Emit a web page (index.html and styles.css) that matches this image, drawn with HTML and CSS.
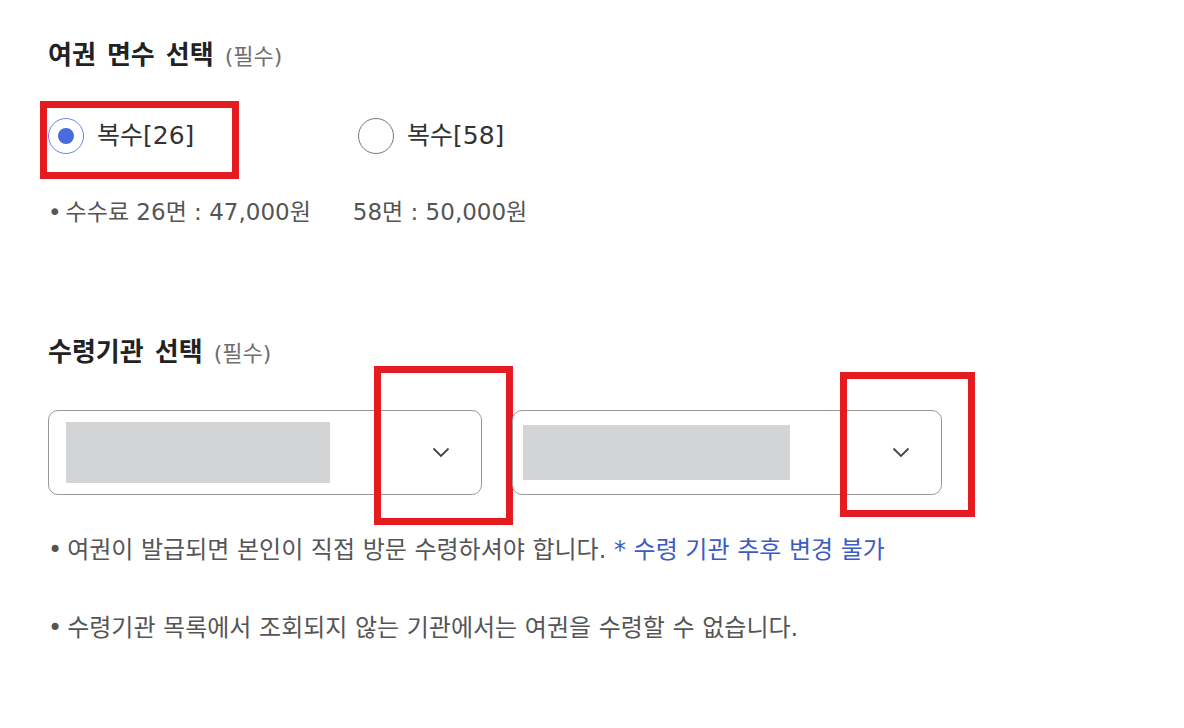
FILE: index.html
```html
<!DOCTYPE html>
<html lang="ko">
<head>
<meta charset="utf-8">
<link rel="stylesheet" href="styles.css">
</head>
<body>
<div class="page">
  <section class="sec sec-pages">
    <h2 class="title">여권 면수 선택 <span class="req">(필수)</span></h2>
    <div class="radios">
      <label class="radio checked">
        <span class="dot"></span>
        <span class="rlabel">복수[26]</span>
        <span class="mark mark-radio"></span>
      </label>
      <label class="radio">
        <span class="dot"></span>
        <span class="rlabel">복수[58]</span>
      </label>
    </div>
    <p class="note fee"><span class="bul">•</span>수수료 26면 : 47,000원<span class="fee2">58면 : 50,000원</span></p>
  </section>

  <section class="sec sec-office">
    <h2 class="title">수령기관 선택 <span class="req">(필수)</span></h2>
    <div class="selects">
      <div class="select s1">
        <span class="ph ph1"></span>
        <svg class="chev" width="18" height="11" viewBox="0 0 18 11"><path d="M1.5 1.5 L9 9 L16.5 1.5" fill="none" stroke="#444" stroke-width="1.8"/></svg>
        <span class="mark mark-s1"></span>
      </div>
      <div class="select s2">
        <span class="ph ph2"></span>
        <svg class="chev" width="18" height="11" viewBox="0 0 18 11"><path d="M1.5 1.5 L9 9 L16.5 1.5" fill="none" stroke="#444" stroke-width="1.8"/></svg>
        <span class="mark mark-s2"></span>
      </div>
    </div>
    <p class="note n1"><span class="bul">•</span>여권이 발급되면 본인이 직접 방문 수령하셔야 합니다. <span class="blue">* 수령 기관 추후 변경 불가</span></p>
    <p class="note n2"><span class="bul">•</span>수령기관 목록에서 조회되지 않는 기관에서는 여권을 수령할 수 없습니다.</p>
  </section>
</div>
</body>
</html>
```

FILE: styles.css
```css
* { box-sizing: border-box; }
html, body { margin: 0; padding: 0; background: #fff; }
body {
  font-family: "DejaVu Sans", "Noto Sans CJK KR", sans-serif;
  color: #555;
  width: 1184px;
  height: 728px;
  overflow: hidden;
}
.page { padding: 38px 0 0 48px; }
.title {
  margin: 0;
  font-size: 26px;
  font-weight: 700;
  color: #222;
  line-height: 34px;
  height: 34px;
  word-spacing: 2px;
}
.req { font-size: 22px; font-weight: 400; color: #6f6f6f; word-spacing: 0; }
.radios {
  display: flex;
  margin-top: 46px;
  height: 36px;
  align-items: center;
}
.radio {
  position: relative;
  display: flex;
  align-items: center;
  gap: 13px;
  width: 310px;
  height: 36px;
  line-height: 36px;
}
.dot {
  flex: none;
  width: 36px; height: 36px;
  border-radius: 50%;
  border: 1.5px solid #777;
  display: flex; align-items: center; justify-content: center;
}
.radio.checked .dot { border-color: #6685e8; }
.radio.checked .dot::after {
  content: ""; width: 16px; height: 16px; border-radius: 50%; background: #4a6be0;
}
.rlabel { font-size: 25px; color: #333; }
.note {
  margin: 0;
  font-size: 24px;
  line-height: 30px;
  height: 30px;
  color: #555;
  white-space: nowrap;
}
.bul { margin-right: 5px; }
.fee { margin-top: 43px; font-size: 23px; }
.fee .bul { margin-right: 4px; }
.fee2 { margin-left: 42px; }
.sec-office { margin-top: 108px; }
.selects { display: flex; gap: 30px; margin-top: 41px; }
.select {
  position: relative;
  height: 85px;
  border: 1px solid #999;
  border-radius: 10px;
  display: flex;
  align-items: center;
  padding-left: 17px;
}
.s1 { width: 434px; }
.s2 { width: 430px; padding-left: 10px; }
.ph { background: #d3d4d6; height: 61px; }
.ph1 { width: 264px; }
.ph2 { width: 267px; height: 55px; }
.chev { margin-left: auto; margin-right: 31px; }
.n1 { margin-top: 40px; }
.n2 { margin-top: 48px; }
.blue { color: #3b5bc6; }
.mark {
  position: absolute;
  border: 7px solid #e51c1f;
  pointer-events: none;
}
.mark-radio { left: -8px; top: -17px; width: 199px; height: 78px; }
.mark-s1 { left: 325px; top: -45px; width: 139px; height: 159px; }
.mark-s2 { left: 327px; top: -39px; width: 135px; height: 145px; }
```
